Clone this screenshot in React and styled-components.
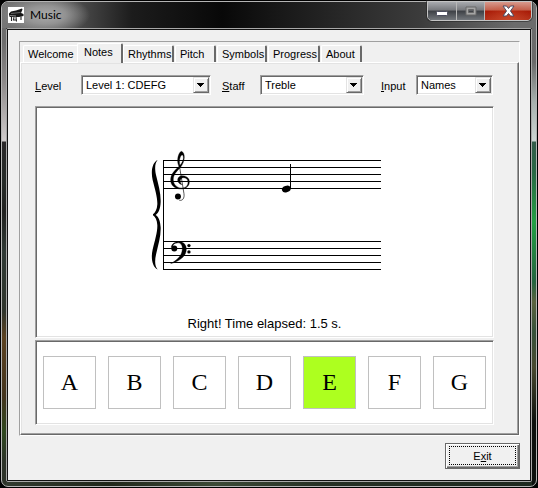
import React, { useState } from "react";
import styled, { createGlobalStyle, css } from "styled-components";

const face = "#f0f0f0";
const shade = "#a0a0a0";
const dark = "#696969";
const pale = "#e3e3e3";

const GlobalStyle = createGlobalStyle`
  *, *::before, *::after { box-sizing: border-box; }
  body { margin: 0; background: #000; }
  button, select, label { font: inherit; color: inherit; }
`;

const Desktop = styled.div`
  min-height: 100vh;
  padding: 1px;
  display: flex;
  background: #000;
  color: #000;
  font: 11px/16px "Liberation Sans", Arial, sans-serif;
`;

const Window = styled.main`
  flex: 1;
  min-width: 0;
  display: flex;
  flex-direction: column;
  border: 1px solid #b4b4b4;
  border-radius: 7px;
  padding: 0 4px 4px;
  background:
    linear-gradient(#6c6c6c 0, #6c6c6c 40px, #8d8a8a 80px, #cfcbcb 139px, #2a2829 140px, #262b28 180px,
      #20211f 210px, #303a35 250px, #30352c 310px, #5c4220 335px, #44351f 395px, #2f481f 430px, #2d3329 460px) left / 4px 100% no-repeat,
    linear-gradient(#6c6c6c 0, #6a6a6a 60px, #a7b0ad 100px, #cdd6d3 139px, #355c4a 140px, #2b6845 170px,
      #23a044 220px, #25643f 280px, #5c6340 300px, #37513a 330px, #4a4a30 365px, #0c100d 420px, #0c100d 460px) right / 4px 100% no-repeat,
    linear-gradient(90deg, #333b30, #20271a 20%, #3c4a36 40%, #263024 60%, #1e291f) bottom / 100% 4px no-repeat,
    #333;
`;

const TitleBar = styled.header`
  height: 26px;
  margin: 0 -4px;
  padding: 0 4px 0 6px;
  display: flex;
  align-items: flex-start;
  border-radius: 6px 6px 0 0;
  background:
    radial-gradient(ellipse 44px 20px at 44px 13px, #aaa 0, #a0a0a0cc 45%, #77777700 100%),
    linear-gradient(90deg, #777 0, #5a5a5a 60px, #1c1c1c 130px, #080808 220px, #151515 50%, #2b2b2b 66%, #3b3b3b 78%, #6c6c6c 96%);
`;

const AppIcon = styled.svg`
  width: 16px;
  height: 16px;
  margin-top: 5px;
  background: #fff;
`;

const Title = styled.h1`
  flex: 1;
  margin: 5px 0 0 6px;
  font: 12px/16px Lato, "Open Sans", sans-serif;
`;

const CaptionButtons = styled.div`
  display: flex;
  height: 20px;
  margin-top: -1px;
  border: 1px solid #c4c4c4;
  border-radius: 0 0 5px 5px;
  overflow: hidden;
  box-shadow: 0 0 0 1px #2228;
`;

const CaptionButton = styled.button`
  width: ${(p) => (p.$close ? 47 : 28)}px;
  padding: 0;
  border: 0;
  border-left: ${(p) => (p.$first ? "0" : "1px solid #b8b8b8")};
  display: flex;
  align-items: center;
  justify-content: center;
  background: ${(p) =>
    p.$close
      ? "radial-gradient(ellipse at 50% 100%, #d4543299, transparent 70%), linear-gradient(#d89a8d 0, #c2604c 45%, #a81b07 50%, #b5321b 100%)"
      : "linear-gradient(#a8aaae 0, #77797d 45%, #3d4045 50%, #73777c 100%)"};
`;

const Client = styled.div`
  flex: 1;
  display: flex;
  flex-direction: column;
  border: 1px solid #a8a8a8;
  border-radius: 2px;
`;

const ClientInner = styled.div`
  flex: 1;
  display: flex;
  flex-direction: column;
  padding: 11px 10px 11px 11px;
  border: 1px solid #111;
  background: ${face};
`;

const TabControl = styled.section`
  flex: 1;
  display: flex;
  flex-direction: column;
  border: 1px solid;
  border-color: ${shade} #fff #fff ${shade};
`;

const TabStrip = styled.div`
  height: 20px;
  padding-left: 3px;
  display: flex;
  align-items: flex-end;
  gap: 1px;
`;

const Tab = styled.button`
  min-width: ${(p) => p.$width}px;
  height: 17px;
  padding: 0 0 0 4px;
  text-align: left;
  white-space: nowrap;
  background: ${face};
  border: solid;
  border-width: 1px 2px 0 1px;
  border-color: #fff ${dark} #fff #fff;
  border-radius: 2px 2px 0 0;
  line-height: 16px;
  ${(p) =>
    p.$selected &&
    css`
      position: relative;
      height: 20px;
      margin: 0 -1px -1px -3px;
      padding: 0 0 3px 6px;
    `}
`;

const TabPage = styled.div`
  flex: 1;
  display: flex;
  flex-direction: column;
  padding: 11px 23px 8px 13px;
  border: 1px solid;
  border-color: #fff ${dark} ${dark} #fff;
  box-shadow: inset -1px -1px ${shade}, inset 1px 1px ${pale};
`;

const Fields = styled.div`
  display: flex;
  gap: 11px;
  margin: 1px 2px 11px 1px;
`;

const Field = styled.div`
  flex: ${(p) => p.$share} 1 0;
  display: flex;
  align-items: center;
`;

const FieldLabel = styled.label`
  flex: none;
  width: ${(p) => p.$width}px;
  padding-left: ${(p) => p.$indent || 0}px;
  padding-top: 2px;
`;

const sunken = css`
  border: 1px solid;
  border-color: ${shade} #fff #fff ${shade};
  box-shadow: inset 1px 1px ${dark}, inset -1px -1px ${pale};
  background: #fff;
`;

const Combo = styled.div`
  ${sunken}
  flex: 1;
  min-width: 0;
  height: 20px;
  padding: 1px;
  display: grid;
  grid-template-columns: 1fr 16px;
`;

const Select = styled.select`
  grid-area: 1 / 1 / 2 / 3;
  width: 100%;
  min-width: 0;
  padding: 1px 18px 0 3px;
  border: 0;
  outline: 0;
  appearance: none;
  background: transparent;
  line-height: 15px;
`;

const ArrowBox = styled.svg`
  grid-area: 1 / 2 / 2 / 3;
  width: 16px;
  height: 16px;
  pointer-events: none;
  background: ${face};
  border: 1px solid;
  border-color: ${pale} ${dark} ${dark} ${pale};
  box-shadow: inset 1px 1px #fff, inset -1px -1px ${shade};
`;

const ScorePanel = styled.div`
  ${sunken}
  flex: 1;
  display: flex;
  flex-direction: column;
  align-items: center;
  justify-content: space-between;
  margin-left: 1px;
  margin-right: 1px;
  padding: 41px 1px 5px;
`;

const Score = styled.svg`
  width: 233px;
  height: 124px;
`;

const Status = styled.p`
  margin: 0;
  font: 13px/16px "Liberation Sans", Arial, sans-serif;
`;

const Answers = styled.div`
  ${sunken}
  display: grid;
  grid-template-columns: repeat(7, 1fr);
  gap: 12px;
  margin: 2px 1px 1px;
  padding: 15px 7px;
`;

const Answer = styled.button`
  height: 53px;
  padding: 0 0 2px;
  border: 1px solid #c0c0c0;
  background: ${(p) => (p.$right ? "#adff1f" : "#fff")};
  font: 24px/28px "Liberation Serif", "Times New Roman", serif;
`;

const Footer = styled.footer`
  display: flex;
  justify-content: flex-end;
  margin-top: 7px;
`;

const ExitButton = styled.button`
  width: 75px;
  height: 26px;
  padding: 2px;
  border: 1px solid ${dark};
  background: ${face};
  box-shadow: inset 1px 1px #fff, inset -1px -1px ${dark}, inset -2px -2px ${shade};
`;

const FocusRing = styled.span`
  display: block;
  height: 19px;
  margin: 0 1px 1px 1px;
  border: 1px dotted #000;
  line-height: 18px;
`;

function PianoIcon() {
  return (
    <AppIcon viewBox="0 0 16 16" aria-hidden="true">
      <path d="M1 6.500 L3 4.500 L8 3.500 L14 1.500 L14.500 2.500 L13 6 L15.500 7 V9 L11 10 L2 10 L1 9 Z" fill="#161616" />
      <path d="M3 6.500 L12.500 5.500" stroke="#8a8a8a" strokeWidth="0.700" />
      <path d="M1.500 8.500 L8 9" stroke="#bbb" strokeWidth="0.700" />
      <path d="M3.500 10 V14 M8 10 L8.500 14.500 M13 9.500 V13 M6 10 L5.500 13 H8" stroke="#222" strokeWidth="1.100" fill="none" />
    </AppIcon>
  );
}

const treblePath =
  "M117 64 C108 48 116 20 125 19 C136 24 137 48 121 68 C108 81 100 90 100 104 C100 119 112 129 124 129 C137 129 145 122 144 110 C143 100 134 97 127 99 C119 103 119 113 126 119 C114 116 109 104 117 96 C125 89 141 92 147 103 C152 119 142 132 124 132 C104 132 91 121 92 103 C93 86 106 75 117 64 Z M120 61 C130 50 133 37 128 30 C122 28 116 44 120 61 Z";
const bassPath =
  "M94 308 C94 297 106 290 118 290 C132 291 140 301 139 315 C138 334 118 350 92 356 C112 346 126 332 127 313 C128 300 121 293 112 294 C105 294 99 298 98 304 Z";
const bracePath =
  "M53 45 C45 53 43 70 49 94 C55 120 63 145 62 172 C61 192 56 203 47 210 C56 216 61 227 62 247 C63 274 55 299 49 325 C43 349 45 366 53 374 C37 367 32 340 38 314 C45 286 53 260 52 240 C51 225 46 216 39 211 V208 C46 203 51 194 52 179 C53 159 45 133 38 105 C32 79 37 52 53 45 Z";

function GrandStaff() {
  return (
    <Score viewBox="148 148 233 124" role="img" aria-label="Grand staff with the note E">
      <g fill="#000" shapeRendering="crispEdges">
        {[160, 167, 174, 181, 188, 241, 248, 255, 262, 269].map((y) => (
          <rect key={y} x="163" y={y} width="218" height="1" />
        ))}
        <rect x="163" y="160" width="1" height="110" />
        <rect x="290" y="164" width="1" height="25" />
      </g>
      <ellipse cx="286.300" cy="189" rx="4.500" ry="3.300" transform="rotate(-20 286.300 189)" />
      <g transform="translate(140 145) scale(0.333)">
        <path d={bracePath} />
        <path d={treblePath} fillRule="evenodd" stroke="#000" strokeWidth="1" />
        <path d="M118 60 L132 146 C134 160 128 168 118 166" fill="none" stroke="#000" strokeWidth="2" />
        <circle cx="114" cy="155" r="9" />
        <path d={bassPath} stroke="#000" strokeWidth="1" />
        <circle cx="103" cy="311" r="9" />
        <circle cx="147" cy="302" r="5" />
        <circle cx="147" cy="321" r="5" />
      </g>
    </Score>
  );
}

function ComboField({ id, hotkey, rest, options, share, labelWidth, indent }) {
  return (
    <Field $share={share}>
      <FieldLabel htmlFor={id} $width={labelWidth} $indent={indent}>
        <u>{hotkey}</u>
        {rest}
      </FieldLabel>
      <Combo>
        <Select id={id}>
          {options.map((o) => (
            <option key={o}>{o}</option>
          ))}
        </Select>
        <ArrowBox viewBox="0 0 14 14" aria-hidden="true">
          <path d="M3 5h7v1h-1v1h-1v1h-1v1h-1v-1h-1v-1h-1v-1h-1z" shapeRendering="crispEdges" />
        </ArrowBox>
      </Combo>
    </Field>
  );
}

const tabs = [
  ["Welcome", 56],
  ["Notes", 46],
  ["Rhythms", 51],
  ["Pitch", 41],
  ["Symbols", 50],
  ["Progress", 52],
  ["About", 41],
];

export default function App() {
  const [tab, setTab] = useState("Notes");
  return (
    <Desktop>
      <GlobalStyle />
      <Window>
        <TitleBar>
          <PianoIcon />
          <Title>Music</Title>
          <CaptionButtons>
            <CaptionButton $first aria-label="Minimize">
              <svg width="12" height="14" viewBox="0 0 12 14">
                <rect x="0.500" y="7.500" width="11" height="4" rx="1" fill="#fff" stroke="#4b4d5e" />
              </svg>
            </CaptionButton>
            <CaptionButton aria-label="Maximize" disabled>
              <svg width="12" height="10" viewBox="0 0 12 10">
                <path d="M1 1h10v8H1z M3.500 3.500v3h5v-3z" fill="#a5a5a5" fillRule="evenodd" stroke="#686868" />
              </svg>
            </CaptionButton>
            <CaptionButton $close aria-label="Close">
              <svg width="13" height="12" viewBox="0 0 13 12">
                <path
                  d="M1 1h3.500l2 2.500 2-2.500H12L8.500 6l3.500 5H8.500l-2-2.500-2 2.500H1l3.500-5z"
                  fill="#fff"
                  stroke="#4b4b63"
                />
              </svg>
            </CaptionButton>
          </CaptionButtons>
        </TitleBar>
        <Client>
          <ClientInner>
            <TabControl>
              <TabStrip role="tablist">
                {tabs.map(([name, width]) => (
                  <Tab
                    key={name}
                    role="tab"
                    aria-selected={tab === name}
                    $selected={tab === name}
                    $width={width}
                    onClick={() => setTab(name)}
                  >
                    {name}
                  </Tab>
                ))}
              </TabStrip>
              <TabPage role="tabpanel">
                <Fields>
                  <ComboField id="level" hotkey="L" rest="evel" share={176} labelWidth={46} options={["Level 1: CDEFG"]} />
                  <ComboField id="staff" hotkey="S" rest="taff" share={142} labelWidth={38} options={["Treble", "Bass"]} />
                  <ComboField id="input" hotkey="I" rest="nput" share={118} labelWidth={41} indent={6} options={["Names"]} />
                </Fields>
                <ScorePanel>
                  <GrandStaff />
                  <Status role="status">Right! Time elapsed: 1.5 s.</Status>
                </ScorePanel>
                <Answers>
                  {["A", "B", "C", "D", "E", "F", "G"].map((n) => (
                    <Answer key={n} $right={n === "E"}>
                      {n}
                    </Answer>
                  ))}
                </Answers>
              </TabPage>
            </TabControl>
            <Footer>
              <ExitButton>
                <FocusRing>
                  E<u>x</u>it
                </FocusRing>
              </ExitButton>
            </Footer>
          </ClientInner>
        </Client>
      </Window>
    </Desktop>
  );
}
